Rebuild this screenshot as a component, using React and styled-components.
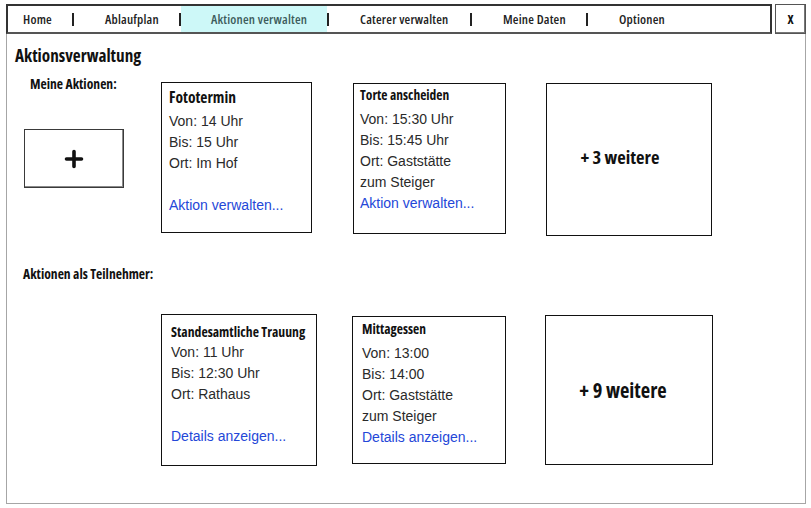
import React from "react";
import styled, { createGlobalStyle } from "styled-components";

const GlobalStyle = createGlobalStyle`
  html, body { margin: 0; padding: 0; background: #fff; }
  * { box-sizing: border-box; }
`;

const HEAD = `"Open Sans", "Roboto", sans-serif`;
const HAND = `"Liberation Sans", "Arial", sans-serif`;

const Page = styled.div`
  padding: 4px 0 0 6px;
  width: 811px;
  height: 508px;
`;

const Frame = styled.div`
  width: 800px;
  height: 500px;
  border: 1px solid #a6a6a6;
  border-top: none;
  display: flex;
  flex-direction: column;
`;

const TopBar = styled.div`
  display: flex;
  gap: 3px;
  margin: 0 -1px;
  height: 30px;
`;

const Nav = styled.nav`
  flex: 1;
  display: flex;
  align-items: stretch;
  border: 2px solid #333;
  border-bottom-color: #555;
`;

const NavItem = styled.div`
  width: ${(p) => p.$w}px;
  padding-left: ${(p) => p.$pl}px;
  display: flex;
  align-items: center;
  font-family: ${HEAD};
  font-stretch: condensed;
  font-weight: 600;
  font-size: 13px;
  letter-spacing: 0.2px;
  color: ${(p) => (p.$active ? "#3d5c5c" : "#222")};
  background: ${(p) => (p.$active ? "#cdf8f8" : "transparent")};
  white-space: nowrap;
`;

const Sep = styled.div`
  width: 2px;
  display: flex;
  align-items: center;
  justify-content: center;
  &::before {
    content: "";
    display: block;
    width: 2px;
    height: 13px;
    background: #222;
  }
`;

const CloseBtn = styled.button`
  width: 31px;
  height: 30px;
  padding: 0;
  border: 1px solid #555;
  box-shadow: inset -1px -1px 0 #777;
  background: #fff;
  font-family: ${HEAD};
  font-stretch: condensed;
  font-weight: 700;
  font-size: 13px;
  color: #111;
`;

const Content = styled.div`
  padding-left: 8px;
  display: flex;
  flex-direction: column;
`;

const Title = styled.h1`
  margin: 11px 0 0 0;
  font-family: ${HEAD};
  font-stretch: condensed;
  font-weight: 700;
  font-size: 17.2px;
  line-height: 22px;
  color: #111;
`;

const SectionLabel = styled.div`
  font-family: ${HEAD};
  font-stretch: condensed;
  font-weight: 700;
  font-size: 13.6px;
  line-height: 16px;
  color: #111;
  margin-left: ${(p) => p.$ml || 0}px;
  margin-top: ${(p) => p.$mt || 0}px;
  white-space: nowrap;
`;

const CardRow = styled.div`
  display: flex;
  align-items: flex-start;
  padding-left: ${(p) => p.$pl}px;
  margin-top: ${(p) => p.$mt || 0}px;
`;

const LeftCol = styled.div`
  width: ${(p) => p.$w}px;
  display: flex;
  flex-direction: column;
`;

const AddButton = styled.button`
  width: 100px;
  height: 59px;
  margin-top: 37px;
  padding: 0;
  border: 1px solid #3a3a3a;
  box-shadow: inset -1px -1px 0 #8a8a8a;
  background: #fff;
  display: flex;
  align-items: center;
  justify-content: center;
`;

const Card = styled.div`
  width: ${(p) => p.$w}px;
  height: ${(p) => p.$h}px;
  margin-top: ${(p) => p.$mt}px;
  margin-left: ${(p) => p.$ml || 0}px;
  border: 1px solid #111;
  padding: ${(p) => p.$pt}px 4px 0 ${(p) => p.$pl}px;
  display: flex;
  flex-direction: column;
  background: #fff;
`;

const CardTitle = styled.div`
  font-family: ${HEAD};
  font-stretch: condensed;
  font-weight: 700;
  font-size: ${(p) => p.$size}px;
  line-height: ${(p) => p.$lh}px;
  margin-bottom: ${(p) => p.$mb}px;
  color: #111;
  white-space: nowrap;
`;

const CardLine = styled.div`
  font-family: ${HAND};
  font-size: 14px;
  line-height: 21px;
  height: 21px;
  color: #2a2a2a;
  white-space: nowrap;
`;

const CardLink = styled.a`
  font-family: ${HAND};
  font-size: 14px;
  line-height: 21px;
  color: #2447d8;
  text-decoration: none;
  white-space: nowrap;
  cursor: pointer;
`;

const MoreCard = styled.div`
  width: ${(p) => p.$w}px;
  height: ${(p) => p.$h}px;
  margin-top: ${(p) => p.$mt}px;
  margin-left: ${(p) => p.$ml}px;
  border: 1px solid #111;
  display: flex;
  align-items: center;
  justify-content: center;
  padding-right: ${(p) => p.$pr}px;
  padding-bottom: ${(p) => p.$pb}px;
  font-family: ${HEAD};
  font-stretch: condensed;
  font-weight: 700;
  font-size: ${(p) => p.$size}px;
  color: #111;
  background: #fff;
`;

const navItems = [
  { label: "Home", w: 64, pl: 15 },
  { label: "Ablaufplan", w: 105, pl: 31 },
  { label: "Aktionen verwalten", w: 146, pl: 30, active: true },
  { label: "Caterer verwalten", w: 141, pl: 31 },
  { label: "Meine Daten", w: 114, pl: 31 },
  { label: "Optionen", w: 150, pl: 31 },
];

function PlusIcon() {
  return (
    <svg width="20" height="20" viewBox="0 0 20 20">
      <path d="M10 2.5 V17.5 M2.5 10 H17.5" stroke="#111" strokeWidth="3.6" strokeLinecap="round" />
    </svg>
  );
}

function EventCard({ c }) {
  return (
    <Card $w={c.w} $h={c.h} $mt={c.mt} $ml={c.ml} $pt={c.pt} $pl={c.pl}>
      <CardTitle $size={c.ts} $lh={c.tlh} $mb={c.tmb}>{c.title}</CardTitle>
      {c.lines.map((l, i) => (
        <CardLine key={i}>{l}</CardLine>
      ))}
      <CardLink>{c.link}</CardLink>
    </Card>
  );
}

const myCards = [
  {
    title: "Fototermin", w: 151, h: 151, mt: 6, ml: 0, pt: 4, pl: 7, ts: 15.5, tlh: 20, tmb: 4,
    lines: ["Von: 14 Uhr", "Bis: 15 Uhr", "Ort: Im Hof", ""], link: "Aktion verwalten...",
  },
  {
    title: "Torte anscheiden", w: 153, h: 151, mt: 7, ml: 41, pt: 2, pl: 6, ts: 13.5, tlh: 18, tmb: 4.5,
    lines: ["Von: 15:30 Uhr", "Bis: 15:45 Uhr", "Ort: Gaststätte", "zum Steiger"], link: "Aktion verwalten...",
  },
];

const partCards = [
  {
    title: "Standesamtliche Trauung", w: 156, h: 152, mt: 32, ml: 0, pt: 8, pl: 9, ts: 13.7, tlh: 18, tmb: 0.5,
    lines: ["Von: 11 Uhr", "Bis: 12:30  Uhr", "Ort: Rathaus", ""], link: "Details anzeigen...",
  },
  {
    title: "Mittagessen", w: 154, h: 148, mt: 34, ml: 35, pt: 3, pl: 9, ts: 13.5, tlh: 18, tmb: 4.5,
    lines: ["Von: 13:00", "Bis: 14:00", "Ort: Gaststätte", "zum Steiger"], link: "Details anzeigen...",
  },
];

export default function App() {
  return (
    <Page>
      <GlobalStyle />
      <Frame>
        <TopBar>
          <Nav>
            {navItems.map((n, i) => (
              <React.Fragment key={n.label}>
                {i > 0 && <Sep />}
                <NavItem $w={n.w} $pl={n.pl} $active={n.active}>{n.label}</NavItem>
              </React.Fragment>
            ))}
          </Nav>
          <CloseBtn>X</CloseBtn>
        </TopBar>
        <Content>
          <Title>Aktionsverwaltung</Title>

          <CardRow $pl={9} $mt={9}>
            <LeftCol $w={137}>
              <SectionLabel $ml={6}>Meine Aktionen:</SectionLabel>
              <AddButton aria-label="Aktion hinzufügen">
                <PlusIcon />
              </AddButton>
            </LeftCol>
            {myCards.map((c) => (
              <EventCard key={c.title} c={c} />
            ))}
            <MoreCard $w={166} $h={153} $mt={7} $ml={40} $pr={18} $pb={6} $size={18.5}>
              + 3 weitere
            </MoreCard>
          </CardRow>

          <SectionLabel $ml={8} $mt={30}>Aktionen als Teilnehmer:</SectionLabel>

          <CardRow $pl={146}>
            {partCards.map((c) => (
              <EventCard key={c.title} c={c} />
            ))}
            <MoreCard $w={168} $h={150} $mt={33} $ml={39} $pr={12} $pb={0} $size={20.5}>
              + 9 weitere
            </MoreCard>
          </CardRow>
        </Content>
      </Frame>
    </Page>
  );
}
